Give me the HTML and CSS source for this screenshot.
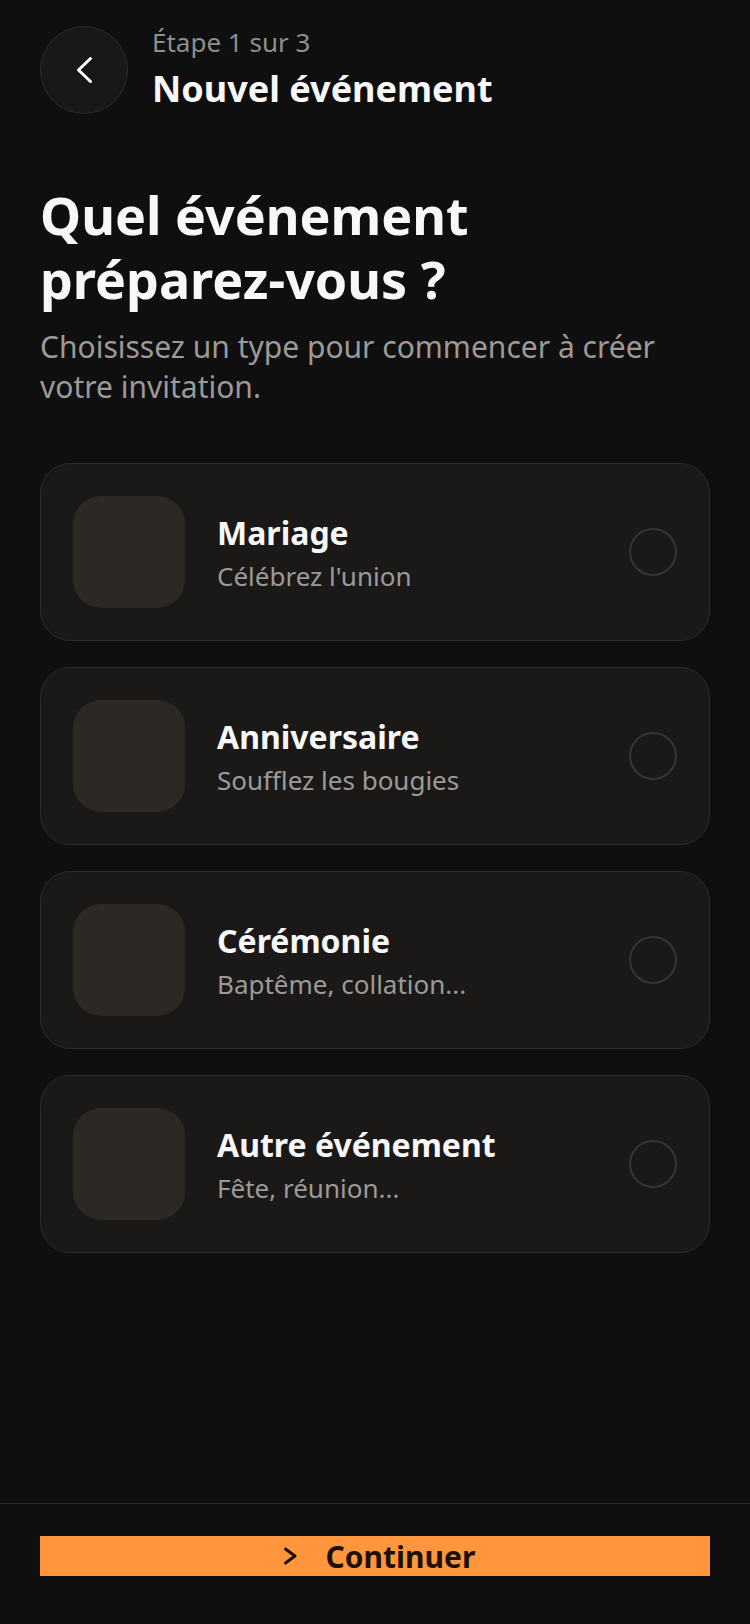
FILE: index.html
```html
<!DOCTYPE html>
<html lang="fr">
<head>
<meta charset="utf-8">
<title>Nouvel événement</title>
<link rel="stylesheet" href="styles.css">
</head>
<body>
<div class="screen">
  <main class="main">
    <header class="header">
      <button class="back" aria-label="Retour">
        <svg width="28" height="28" viewBox="0 0 28 28"><path d="M20.5 2.5 L8.5 14 L20.5 25.5" fill="none" stroke="#ffffff" stroke-width="3" stroke-linecap="round" stroke-linejoin="round"/></svg>
      </button>
      <div class="header-text">
        <div class="step">Étape 1 sur 3</div>
        <div class="header-title">Nouvel événement</div>
      </div>
    </header>

    <h1 class="title">Quel événement<br>préparez-vous ?</h1>
    <p class="subtitle">Choisissez un type pour commencer à créer votre invitation.</p>

    <div class="list">
      <div class="card">
        <div class="card-icon"></div>
        <div class="card-text">
          <div class="card-title">Mariage</div>
          <div class="card-sub">Célébrez l'union</div>
        </div>
        <div class="radio"></div>
      </div>
      <div class="card">
        <div class="card-icon"></div>
        <div class="card-text">
          <div class="card-title">Anniversaire</div>
          <div class="card-sub">Soufflez les bougies</div>
        </div>
        <div class="radio"></div>
      </div>
      <div class="card">
        <div class="card-icon"></div>
        <div class="card-text">
          <div class="card-title">Cérémonie</div>
          <div class="card-sub">Baptême, collation...</div>
        </div>
        <div class="radio"></div>
      </div>
      <div class="card">
        <div class="card-icon"></div>
        <div class="card-text">
          <div class="card-title">Autre événement</div>
          <div class="card-sub">Fête, réunion...</div>
        </div>
        <div class="radio"></div>
      </div>
    </div>
  </main>

  <footer class="footer">
    <button class="cta">
      <svg class="cta-icon" width="36" height="36" viewBox="0 0 36 36"><path d="M10.5 11 L20 18 L10.5 25" fill="none" stroke="#1c1108" stroke-width="3" stroke-linecap="round" stroke-linejoin="round"/></svg>
      <span>Continuer</span>
    </button>
  </footer>
</div>
</body>
</html>
```

FILE: styles.css
```css
* { box-sizing: border-box; }
html, body {
  margin: 0;
  padding: 0;
  background: #0f0f0f;
}
body {
  font-family: "Noto Sans", "Open Sans", sans-serif;
  color: #f5f5f5;
}
.screen {
  width: 750px;
  height: 1624px;
  display: flex;
  flex-direction: column;
}
.main {
  flex: 1;
  padding: 26px 40px 0;
}
.header {
  display: flex;
  align-items: center;
  gap: 24px;
}
.back {
  width: 88px;
  height: 88px;
  border-radius: 50%;
  border: 1px solid #2c2c2c;
  background: #181818;
  display: flex;
  align-items: center;
  justify-content: center;
  padding: 0;
  flex: none;
}
.header-text {
  display: flex;
  flex-direction: column;
  gap: 12px;
}
.step {
  font-size: 26px;
  line-height: 26px;
  color: #8e8e8e;
}
.header-title {
  font-size: 36px;
  line-height: 44px;
  font-weight: 700;
  color: #f7f7f7;
}
.title {
  margin: 69px 0 0;
  font-size: 52px;
  line-height: 64px;
  font-weight: 700;
  color: #f7f7f7;
}
.subtitle {
  margin: 16px 0 0;
  font-size: 30px;
  line-height: 40px;
  color: #9c9a98;
}
.list {
  margin-top: 56px;
  display: flex;
  flex-direction: column;
  gap: 26px;
}
.card {
  display: flex;
  align-items: center;
  padding: 32px;
  background: #1a1918;
  border: 1px solid #2e2d2c;
  border-radius: 30px;
}
.card-icon {
  width: 112px;
  height: 112px;
  border-radius: 28px;
  background: #2c2823;
  flex: none;
}
.card-text {
  flex: 1;
  margin-left: 32px;
  display: flex;
  flex-direction: column;
  gap: 7px;
}
.card-title {
  font-size: 32px;
  line-height: 40px;
  font-weight: 700;
  color: #f7f7f7;
}
.card-sub {
  font-size: 26px;
  line-height: 32px;
  color: #9c9a98;
}
.radio {
  width: 48px;
  height: 48px;
  border-radius: 50%;
  border: 2px solid #363534;
  flex: none;
}
.footer {
  border-top: 1px solid #2a2a2a;
  padding: 32px 40px 48px;
}
.cta {
  width: 100%;
  height: 40px;
  border: 0;
  background: #ff953d;
  display: flex;
  align-items: center;
  justify-content: center;
  gap: 15px;
  font-family: "Noto Sans", "Open Sans", sans-serif;
  font-size: 30px;
  font-weight: 700;
  color: #1c1108;
  padding: 0;
}
.cta-icon { flex: none; }
```
